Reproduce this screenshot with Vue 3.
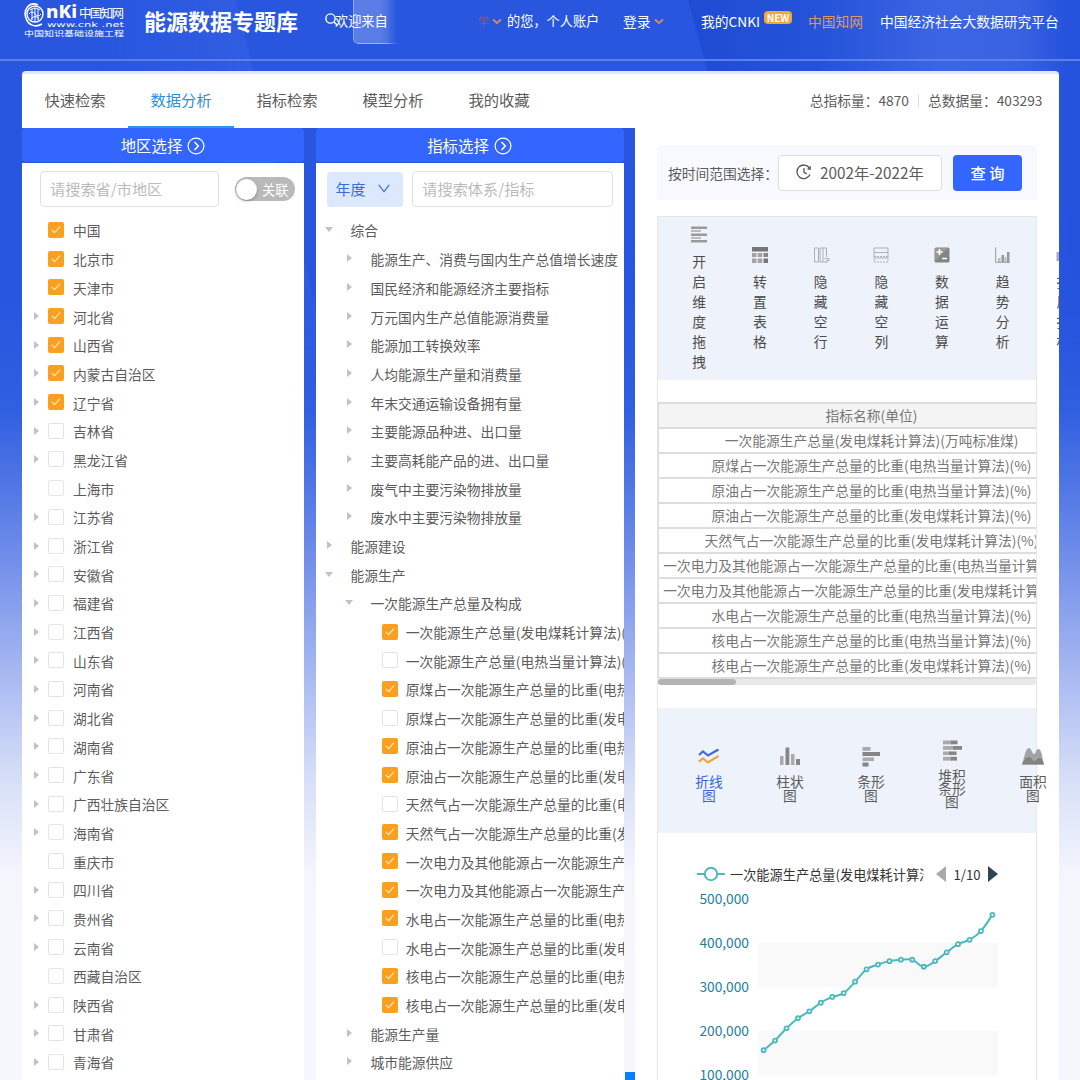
<script setup>
import { computed, ref } from 'vue'

// 顶部标签页
const tabs = ['快速检索', '数据分析', '指标检索', '模型分析', '我的收藏']
const activeTab = ref('数据分析')

// 地区列表
const noChildren = ['中国', '北京市', '天津市', '上海市', '重庆市', '西藏自治区']
const checkedRegions = ['中国', '北京市', '天津市', '河北省', '山西省', '内蒙古自治区', '辽宁省']
const regions = [
  '中国', '北京市', '天津市', '河北省', '山西省', '内蒙古自治区', '辽宁省', '吉林省',
  '黑龙江省', '上海市', '江苏省', '浙江省', '安徽省', '福建省', '江西省', '山东省',
  '河南省', '湖北省', '湖南省', '广东省', '广西壮族自治区', '海南省', '重庆市', '四川省',
  '贵州省', '云南省', '西藏自治区', '陕西省', '甘肃省', '青海省'
].map((name) => ({
  name,
  checked: checkedRegions.includes(name),
  expandable: !noChildren.includes(name)
}))

// 指标树，level 2 为可勾选的叶子节点
const indicators = [
  { level: 0, open: true, name: '综合' },
  { level: 1, name: '能源生产、消费与国内生产总值增长速度' },
  { level: 1, name: '国民经济和能源经济主要指标' },
  { level: 1, name: '万元国内生产总值能源消费量' },
  { level: 1, name: '能源加工转换效率' },
  { level: 1, name: '人均能源生产量和消费量' },
  { level: 1, name: '年末交通运输设备拥有量' },
  { level: 1, name: '主要能源品种进、出口量' },
  { level: 1, name: '主要高耗能产品的进、出口量' },
  { level: 1, name: '废气中主要污染物排放量' },
  { level: 1, name: '废水中主要污染物排放量' },
  { level: 0, name: '能源建设' },
  { level: 0, open: true, name: '能源生产' },
  { level: 1, open: true, name: '一次能源生产总量及构成' },
  { level: 2, checked: true, name: '一次能源生产总量(发电煤耗计算法)(万吨标准煤)' },
  { level: 2, checked: false, name: '一次能源生产总量(电热当量计算法)(万吨标准煤)' },
  { level: 2, checked: true, name: '原煤占一次能源生产总量的比重(电热当量计算法)(%)' },
  { level: 2, checked: false, name: '原煤占一次能源生产总量的比重(发电煤耗计算法)(%)' },
  { level: 2, checked: true, name: '原油占一次能源生产总量的比重(电热当量计算法)(%)' },
  { level: 2, checked: true, name: '原油占一次能源生产总量的比重(发电煤耗计算法)(%)' },
  { level: 2, checked: false, name: '天然气占一次能源生产总量的比重(电热当量计算法)(%)' },
  { level: 2, checked: true, name: '天然气占一次能源生产总量的比重(发电煤耗计算法)(%)' },
  { level: 2, checked: true, name: '一次电力及其他能源占一次能源生产总量的比重(电热当量计算法)(%)' },
  { level: 2, checked: true, name: '一次电力及其他能源占一次能源生产总量的比重(发电煤耗计算法)(%)' },
  { level: 2, checked: true, name: '水电占一次能源生产总量的比重(电热当量计算法)(%)' },
  { level: 2, checked: false, name: '水电占一次能源生产总量的比重(发电煤耗计算法)(%)' },
  { level: 2, checked: true, name: '核电占一次能源生产总量的比重(电热当量计算法)(%)' },
  { level: 2, checked: true, name: '核电占一次能源生产总量的比重(发电煤耗计算法)(%)' },
  { level: 1, name: '能源生产量' },
  { level: 1, name: '城市能源供应' }
]

const tools = [
  { icon: 'drag', name: '开启维度拖拽' },
  { icon: 'table', name: '转置表格' },
  { icon: 'rows', name: '隐藏空行' },
  { icon: 'cols', name: '隐藏空列' },
  { icon: 'calc', name: '数据运算' },
  { icon: 'trend', name: '趋势分析' },
  { icon: 'sort', name: '指属指标' }
]

const tableRows = [
  '一次能源生产总量(发电煤耗计算法)(万吨标准煤)',
  '原煤占一次能源生产总量的比重(电热当量计算法)(%)',
  '原油占一次能源生产总量的比重(电热当量计算法)(%)',
  '原油占一次能源生产总量的比重(发电煤耗计算法)(%)',
  '天然气占一次能源生产总量的比重(发电煤耗计算法)(%)',
  '一次电力及其他能源占一次能源生产总量的比重(电热当量计算法)(%)',
  '一次电力及其他能源占一次能源生产总量的比重(发电煤耗计算法)(%)',
  '水电占一次能源生产总量的比重(电热当量计算法)(%)',
  '核电占一次能源生产总量的比重(电热当量计算法)(%)',
  '核电占一次能源生产总量的比重(发电煤耗计算法)(%)'
]

const chartTypes = [
  { icon: 'line', lines: ['折线', '图'] },
  { icon: 'bar', lines: ['柱状', '图'] },
  { icon: 'hbar', lines: ['条形', '图'] },
  { icon: 'stack', lines: ['堆积', '条形', '图'] },
  { icon: 'area', lines: ['面积', '图'] }
]
const activeChart = ref('line')

// 折线图数据（万吨标准煤）
const series = [
  156300, 178300, 206100, 229000, 244800, 264200, 277400, 286000, 312100, 340200, 351000,
  358800, 362200, 361900, 346000, 358900, 378900, 397300, 407300, 427100, 464000
]
const yTicks = [500000, 400000, 300000, 200000, 100000]
const yOf = (value) => 15 + (500000 - value) * 0.00044

const points = computed(() => series.map((value, i) => ({ x: 105.6 + i * 11.44, y: yOf(value) })))

// 平滑曲线
const linePath = computed(() => {
  const p = points.value
  let d = `M${p[0].x} ${p[0].y}`
  for (let i = 0; i < p.length - 1; i++) {
    const prev = p[i - 1] || p[i]
    const next = p[i + 2] || p[i + 1]
    const c1 = { x: p[i].x + (p[i + 1].x - prev.x) / 6, y: p[i].y + (p[i + 1].y - prev.y) / 6 }
    const c2 = { x: p[i + 1].x - (next.x - p[i].x) / 6, y: p[i + 1].y - (next.y - p[i].y) / 6 }
    d += ` C${c1.x} ${c1.y} ${c2.x} ${c2.y} ${p[i + 1].x} ${p[i + 1].y}`
  }
  return d
})
</script>

<template>
  <div class="page">
    <div class="shade shade-left"></div>
    <div class="shade shade-right"></div>

    <header class="header">
      <svg class="logo" width="102" height="38" viewBox="0 0 102 38">
        <circle cx="11" cy="12" r="8" fill="none" stroke="#fff" stroke-width="1.4" />
        <path d="M14 3 C5 -1 -1 8 2 16 C4 23 11 26 18 22" fill="none" stroke="#fff" stroke-width="1.6" />
        <path d="M6 8 Q11 4 16 8 M5 12 Q8 8 11 12 T17 12 M7 17 Q11 12 15 17 M8 7 V18 M11 6 V19 M14 7 V18" fill="none" stroke="#fff" stroke-width="1" />
        <g fill="#fff">
          <text x="22" y="15.500" font-size="17.500" class="logo-latin" textLength="31" lengthAdjust="spacingAndGlyphs">nKi</text>
          <text x="55" y="15.500" font-size="12.500" class="logo-script" textLength="45" lengthAdjust="spacing">中国知网</text>
          <text x="23" y="24.500" font-size="7" class="logo-url" textLength="77" lengthAdjust="spacingAndGlyphs">www.cnk .net</text>
          <text x="0" y="34" font-size="7" textLength="100" lengthAdjust="spacingAndGlyphs">中国知识基础设施工程</text>
        </g>
      </svg>
      <h1 class="title">能源数据专题库</h1>
      <div class="welcome">
        <svg width="14" height="14" viewBox="0 0 14 14" fill="none" stroke="#fff" stroke-width="1.400">
          <circle cx="5.500" cy="5.500" r="4.600" />
          <path d="M9 9 L12.500 12.500" />
        </svg>
        <span>欢迎来自</span>
        <i class="glass"></i>
      </div>
      <div class="school">
        <span>学</span>
        <svg width="10" height="7" viewBox="0 0 10 7"><path d="M1 1.500 L5 5 L9 1.500" fill="none" stroke="#d98a5c" stroke-width="1.800" /></svg>
      </div>
      <span class="account">的您，个人账户</span>
      <div class="login">
        <span>登录</span>
        <svg width="10" height="7" viewBox="0 0 10 7"><path d="M1 1.500 L5 5 L9 1.500" fill="none" stroke="#d98a5c" stroke-width="1.800" /></svg>
      </div>
      <div class="my">
        <span>我的CNKI</span>
        <b class="badge">NEW</b>
      </div>
      <span class="orange">中国知网</span>
      <span class="platform">中国经济社会大数据研究平台</span>
    </header>

    <main class="main">
      <nav class="tabs">
        <span v-for="tab in tabs" :key="tab" class="tab" :class="{ active: tab === activeTab }">{{ tab }}</span>
        <div class="totals">
          <span>总指标量：4870</span>
          <i></i>
          <span>总数据量：403293</span>
        </div>
      </nav>

      <div class="columns">
        <!-- 地区 -->
        <section class="panel region">
          <div class="panel-head">
            地区选择
            <svg width="18" height="18" viewBox="0 0 18 18" fill="none" stroke="#fff" stroke-width="1.200">
              <circle cx="9" cy="9" r="7.900" />
              <path d="M7.500 5 L11.300 9 L7.500 13" stroke-width="1.500" />
            </svg>
          </div>
          <div class="panel-body">
            <div class="search-row">
              <div class="input">请搜索省/市地区</div>
              <div class="switch"><i></i>关联</div>
            </div>
            <ul class="tree">
              <li v-for="item in regions" :key="item.name">
                <span class="arrow" :class="{ hidden: !item.expandable }"></span>
                <span class="check" :class="{ on: item.checked }">
                  <svg v-if="item.checked" width="16" height="16" viewBox="0 0 16 16"><path d="M3.800 7.800 L6.600 10.600 L12 4.600" /></svg>
                </span>
                <span class="label">{{ item.name }}</span>
              </li>
            </ul>
          </div>
        </section>

        <!-- 指标 -->
        <section class="panel indicator">
          <div class="panel-head">
            指标选择
            <svg width="18" height="18" viewBox="0 0 18 18" fill="none" stroke="#fff" stroke-width="1.200">
              <circle cx="9" cy="9" r="7.900" />
              <path d="M7.500 5 L11.300 9 L7.500 13" stroke-width="1.500" />
            </svg>
          </div>
          <div class="panel-body">
            <div class="search-row">
              <div class="select">
                年度
                <svg width="12" height="9" viewBox="0 0 12 9"><path d="M0.800 0.800 L6 7.500 L11.200 0.800" fill="none" stroke="#3d6bd6" stroke-width="1.200" /></svg>
              </div>
              <div class="input">请搜索体系/指标</div>
            </div>
            <ul class="tree">
              <li v-for="(item, i) in indicators" :key="i" :class="'level-' + item.level">
                <span v-if="item.level < 2" class="arrow" :class="{ open: item.open }"></span>
                <span v-else class="check" :class="{ on: item.checked }">
                  <svg v-if="item.checked" width="16" height="16" viewBox="0 0 16 16"><path d="M3.800 7.800 L6.600 10.600 L12 4.600" /></svg>
                </span>
                <span class="label">{{ item.name }}</span>
              </li>
            </ul>
          </div>
        </section>

        <!-- 结果 -->
        <section class="result">
          <div class="query">
            <span class="query-label">按时间范围选择：</span>
            <div class="date">
              <svg width="16" height="16" viewBox="0 0 16 16" fill="none" stroke="#555" stroke-width="1.300">
                <path d="M14 10.600 A6.800 6.800 0 1 1 13.600 4.300" />
                <path d="M14.200 2.200 V5 H11.600 M8 4 V8.400 L10.800 9.800" />
              </svg>
              2002年-2022年
            </div>
            <div class="button">查 询</div>
          </div>

          <div class="sheet">
            <div class="tools">
              <div v-for="tool in tools" :key="tool.icon" class="tool">
                <svg width="18" height="18" viewBox="0 0 18 18">
                  <g v-if="tool.icon === 'drag'" fill="#999">
                    <rect x="1" y="0.500" width="16" height="2.500" />
                    <rect x="1" y="4" width="10" height="2" fill="#bbb" />
                    <rect x="1" y="7.500" width="16" height="2.500" />
                    <rect x="1" y="11" width="10" height="2" fill="#bbb" />
                    <rect x="1" y="14" width="16" height="2.500" />
                  </g>
                  <g v-else-if="tool.icon === 'table'" fill="#a3a3a3">
                    <rect x="1" y="1" width="16" height="4.500" fill="#777" />
                    <rect x="1" y="7" width="4.500" height="4" /><rect x="6.700" y="7" width="4.500" height="4" /><rect x="12.500" y="7" width="4.500" height="4" fill="#888" />
                    <rect x="1" y="12.500" width="4.500" height="4.500" /><rect x="6.700" y="12.500" width="4.500" height="4.500" /><rect x="12.500" y="12.500" width="4.500" height="4.500" fill="#777" />
                  </g>
                  <g v-else-if="tool.icon === 'rows'" fill="none" stroke="#b0b0b0">
                    <path d="M2.500 2 H6.500 V16 H2.500 Z M8 2 H11 V16 H8 Z M14.500 2 V11 M11 2 H14.500 M11 16 H16" />
                    <path d="M12.500 12.500 H17 V14.500 H14" />
                  </g>
                  <g v-else-if="tool.icon === 'cols'" fill="none" stroke="#b0b0b0">
                    <path d="M2 2 H16 V6.500 H2 Z M2 6.500 V12 H16 V6.500" />
                    <path d="M2 10.500 H16 M2 13 V16 H16 V13" stroke-dasharray="2 1" />
                  </g>
                  <g v-else-if="tool.icon === 'calc'">
                    <rect x="1.500" y="1.500" width="15" height="15" rx="1.500" fill="#848484" />
                    <path d="M2 15 L15 2 H3 Q2 2 2 3 Z" fill="#999" />
                    <path d="M3.500 6 H9.500 M6.500 3 V9 M9 12.500 H14" stroke="#fff" stroke-width="1.600" />
                  </g>
                  <g v-else-if="tool.icon === 'trend'" fill="#999">
                    <path d="M1.700 1.500 V16.300 H16" fill="none" stroke="#999" />
                    <rect x="4" y="12" width="2.500" height="4" fill="#bbb" /><rect x="7.500" y="9" width="2.500" height="7" />
                    <rect x="10.500" y="11" width="2" height="5" fill="#bbb" /><rect x="13" y="6" width="2.500" height="10" />
                  </g>
                  <rect v-else x="2.500" y="6" width="13" height="9" fill="#a5abb8" />
                </svg>
                <span>{{ tool.name }}</span>
              </div>
            </div>

            <div class="table-wrap">
              <table>
                <thead>
                  <tr><th>指标名称(单位)</th></tr>
                </thead>
                <tbody>
                  <tr v-for="row in tableRows" :key="row"><td>{{ row }}</td></tr>
                </tbody>
              </table>
              <div class="scrollbar"><i></i></div>
            </div>

            <div class="chart-types">
              <div v-for="type in chartTypes" :key="type.icon" class="chart-type" :class="{ active: type.icon === activeChart }">
                <svg width="24" height="22" viewBox="0 0 24 22">
                  <g v-if="type.icon === 'line'" fill="none" stroke-width="2.200">
                    <path d="M2 9 L6 5.500 L11 9.500 L21.500 3.500" stroke="#4468d6" />
                    <path d="M2 15.500 L6 12.500 L11 16.500 L21.500 10" stroke="#f0a344" />
                  </g>
                  <g v-else-if="type.icon === 'bar'" fill="#868686">
                    <rect x="2" y="10" width="3.500" height="9" fill="#aaa" /><rect x="7.500" y="1.500" width="3.800" height="17.500" />
                    <rect x="13" y="8" width="3.500" height="11" fill="#aaa" /><rect x="18" y="13" width="4" height="6" />
                  </g>
                  <g v-else-if="type.icon === 'hbar'" fill="#868686">
                    <rect x="3.500" y="1" width="8" height="3.800" fill="#aaa" /><rect x="3.500" y="6" width="17.500" height="4" />
                    <rect x="3.500" y="11.500" width="11.500" height="3.500" fill="#aaa" /><rect x="3.500" y="16.500" width="6" height="4" />
                  </g>
                  <g v-else-if="type.icon === 'stack'" fill="#868686">
                    <rect x="3" y="0.500" width="9" height="3.800" fill="#aaa" /><rect x="11" y="0.500" width="6.500" height="3.800" />
                    <rect x="3" y="6" width="11" height="3.800" fill="#aaa" /><rect x="13" y="6" width="9" height="3.800" />
                    <rect x="3" y="11.500" width="8" height="3.500" fill="#aaa" /><rect x="9" y="11.500" width="7.500" height="3.500" />
                    <rect x="3" y="16.800" width="9" height="3.800" fill="#aaa" /><rect x="11" y="16.800" width="6" height="3.800" />
                  </g>
                  <g v-else>
                    <path d="M1 18.500 C3 14 4 2 8 2 C10.500 2 11 8 13 8 C15 8 15 3 17.500 3 C21 3 21.500 14 23 18.500 Z" fill="#a3a3a3" />
                    <path d="M1 18.500 C3 14 5 11 8 11 C11 11 11 15 13 15 C15.500 15 16 12 18.500 12 C21 12 22 15 23 18.500 Z" fill="#828282" />
                  </g>
                </svg>
                <span v-for="line in type.lines" :key="line" class="type-line">{{ line }}</span>
              </div>
            </div>

            <div class="legend">
              <svg width="28" height="16" viewBox="0 0 28 16" stroke="#4bb9bf" stroke-width="2">
                <path d="M0 8 H28" />
                <circle cx="14" cy="8" r="6.200" fill="#fff" />
              </svg>
              <span class="legend-name">一次能源生产总量(发电煤耗计算法)</span>
              <svg width="10" height="16" viewBox="0 0 10 16"><path d="M10 0 V16 L0 8 Z" fill="#aaa" /></svg>
              <span class="legend-page">1/10</span>
              <svg width="10" height="16" viewBox="0 0 10 16"><path d="M0 0 V16 L10 8 Z" fill="#2f4554" /></svg>
            </div>
            <svg class="chart" width="378" height="196" viewBox="0 0 378 196">
              <rect x="100" y="59" width="240" height="44" fill="#f9f9f9" />
              <rect x="100" y="147" width="240" height="44" fill="#f9f9f9" />
              <text v-for="tick in yTicks" :key="tick" x="91" :y="yOf(tick) + 5" text-anchor="end">{{ tick.toLocaleString('en-US') }}</text>
              <path :d="linePath" fill="none" stroke="#4bb9bf" stroke-width="2" />
              <circle v-for="(point, i) in points" :key="i" :cx="point.x" :cy="point.y" r="2" fill="#fff" stroke="#4bb9bf" stroke-width="1.800" />
            </svg>
          </div>
        </section>
      </div>
    </main>
    <div class="float-block"></div>
  </div>
</template>

<style>
body {
  margin: 0;
  overflow: hidden;
}
</style>

<style scoped>
.page {
  position: relative;
  width: 1080px;
  height: 1080px;
  overflow: hidden;
  box-sizing: border-box;
  font-family: "Noto Sans CJK SC", "Noto Sans", sans-serif;
  font-size: 13.75px;
  color: #5c5c5c;
  background: linear-gradient(180deg, #2856df 0, #2856df 300px, #305fe0 410px, #6686e8 535px, #b4c2f3 700px, #d9e1f8 785px, #f3f5fc 870px, #f5f7fc 920px);
}
.page i {
  font-style: normal;
}
.shade {
  position: absolute;
  top: 0;
  height: 400px;
  mask-image: linear-gradient(180deg, #000 50%, transparent);
}
.shade-left {
  left: 90px;
  width: 250px;
  background: linear-gradient(90deg, rgba(70, 110, 235, 0), rgba(80, 118, 236, 0.35));
  clip-path: polygon(0 0, 58% 0, 100% 100%, 0 100%);
}
.shade-right {
  left: 680px;
  width: 400px;
  background: linear-gradient(90deg, #1f4bd2 0, #2453da 35%, #3c65e3 65%, #3962e2 85%, #2452dc 97%);
  clip-path: polygon(2% 0, 100% 0, 100% 100%, 30% 100%);
}
.header {
  position: relative;
  height: 59px;
  padding-left: 24px;
  border-bottom: 2px solid #5c80ea;
  display: grid;
  grid-template-columns: 120px 181px 153px 29px 116px 78px 107px 72px 1fr;
  align-items: start;
  color: #fff;
  line-height: 20px;
  white-space: nowrap;
}
.header > * {
  margin-top: 11px;
}
.header .logo {
  margin-top: 2px;
}
.logo-latin {
  font-family: "Noto Sans", sans-serif;
  font-weight: 800;
}
.logo-script {
  font-family: "Liberation Serif", "Noto Sans CJK SC", serif;
}
.logo-url {
  font-family: "DejaVu Sans", sans-serif;
}
.header .title {
  margin: 5px 0 0;
  font-size: 22px;
  line-height: 30px;
  font-weight: 700;
}
.welcome {
  display: flex;
  font-size: 13.2px;
}
.welcome svg {
  margin: 2px -4px 0 0;
  flex: none;
}
.glass {
  position: absolute;
  left: 353px;
  top: -4px;
  width: 44px;
  height: 46px;
  border: 1px solid rgba(255, 255, 255, 0.4);
  border-right: 0;
  border-radius: 5px 0 0 5px;
  background: linear-gradient(90deg, rgba(255, 255, 255, 0.24) 55%, rgba(255, 255, 255, 0.1));
  mask-image: linear-gradient(90deg, #000 75%, transparent);
}
.school,
.login {
  display: flex;
  align-items: center;
  gap: 3px;
}
.school span {
  width: 11px;
  font-size: 11px;
  color: #775d9f;
}
.account {
  font-size: 13.2px;
}
.my {
  display: flex;
  gap: 4px;
}
.badge {
  width: 28px;
  height: 13px;
  line-height: 13px;
  border-radius: 4px;
  background: #f4a63a;
  font-size: 10px;
  text-align: center;
}
.orange {
  color: #d99a6c;
}
.main {
  position: relative;
  margin: 10px 21px 0 22px;
}
.tabs {
  height: 57px;
  display: flex;
  background: #fff;
  border-top: 3px solid #e0e9fd;
  border-radius: 4px 4px 0 0;
  box-sizing: border-box;
}
.tab {
  width: 106px;
  height: 54px;
  box-sizing: border-box;
  text-align: center;
  font-size: 15.3px;
  line-height: 51px;
}
.tab.active {
  color: #2a90dc;
  border-bottom: 2px solid #2a96ee;
}
.totals {
  display: flex;
  align-items: center;
  gap: 9px;
  margin-left: auto;
  padding: 0 16.5px 2px 0;
}
.totals i {
  width: 1px;
  height: 13px;
  background: #ddd;
}
.columns {
  display: grid;
  grid-template-columns: 282px 308px 1fr;
  column-gap: 11.5px;
  height: 960px;
}
.panel {
  min-width: 0;
  display: flex;
  flex-direction: column;
}
.panel-head {
  height: 34px;
  display: flex;
  align-items: center;
  justify-content: center;
  gap: 5px;
  padding-bottom: 1px;
  box-sizing: border-box;
  border-radius: 4px;
  background: #3366ff;
  color: #fff;
  font-size: 15.4px;
}
.panel-head svg {
  margin-top: 3px;
}
.panel-body {
  flex: 1;
  margin-top: 1px;
  background: #fff;
  overflow: hidden;
}
.search-row {
  display: flex;
  align-items: center;
  padding: 8px 9px 0 18px;
  height: 36px;
}
.indicator .search-row {
  padding: 8px 11px 0 11px;
}
.input {
  width: 179px;
  height: 36px;
  box-sizing: border-box;
  padding-left: 9px;
  border: 1px solid #e2dfe0;
  border-radius: 4px;
  font-size: 15.2px;
  line-height: 33px;
  color: #bbb;
}
.indicator .input {
  width: 201px;
}
.switch {
  width: 60px;
  height: 24px;
  margin-left: auto;
  display: flex;
  align-items: center;
  box-sizing: border-box;
  border-radius: 12px;
  background: #b9b9b9;
  color: #fff;
  font-size: 13.2px;
}
.switch i {
  width: 21px;
  height: 21px;
  margin: 0 5px 0 1px;
  border-radius: 50%;
  background: #fff;
  box-shadow: 0 1px 3px rgba(0, 0, 0, 0.3);
}
.select {
  width: 77px;
  height: 35px;
  margin-right: 9px;
  padding: 0 13px 2px 9px;
  box-sizing: border-box;
  display: flex;
  align-items: center;
  justify-content: space-between;
  border-radius: 4px;
  background: #dbe8fd;
  color: #3d6bd6;
  font-size: 15px;
}
.tree {
  list-style: none;
  margin: 0;
  padding: 8.6px 0 0 11.5px;
}
.indicator .tree {
  padding-left: 9px;
}
.tree li {
  height: 28.69px;
  display: flex;
  align-items: center;
  white-space: nowrap;
}
.arrow {
  flex: none;
  width: 14.5px;
  display: flex;
}
.arrow::before {
  content: "";
  border: 4px solid transparent;
  border-left: 5px solid #bfc2c8;
  border-right: 0;
}
.arrow.open::before {
  border: 4px solid transparent;
  border-top: 5px solid #bfc2c8;
  border-bottom: 0;
}
.arrow.hidden {
  visibility: hidden;
}
.indicator .arrow {
  width: 26px;
}
.indicator .arrow:not(.open) {
  padding-left: 2px;
  padding-bottom: 1px;
  width: 24px;
}
.level-1 {
  padding-left: 20px;
}
.level-2 {
  padding-left: 57px;
}
.check {
  flex: none;
  width: 16px;
  height: 16px;
  box-sizing: border-box;
  border: 1px solid #e2e4e6;
  border-radius: 2px;
  background: #fff;
}
.check.on {
  border: 0;
  background: #faa01e;
}
.check svg {
  display: block;
}
.check path {
  fill: none;
  stroke: #fde9c4;
  stroke-width: 1.2;
}
.label {
  padding-top: 1px;
}
.check + .label {
  padding-left: 9px;
}
.indicator .check + .label {
  padding-left: 8.3px;
}
.result {
  min-width: 0;
  overflow: hidden;
  background: #fff;
  padding: 17px 22px 0 22px;
}
.query {
  height: 55px;
  display: flex;
  align-items: center;
  background: #f7f9ff;
  padding-left: 11px;
  box-sizing: border-box;
  border-radius: 4px;
  white-space: nowrap;
}
.query-label {
  width: 110px;
}
.date {
  width: 164px;
  height: 36px;
  box-sizing: border-box;
  padding: 0 0 1px 17px;
  display: flex;
  align-items: center;
  gap: 8px;
  background: #fff;
  border: 1px solid #dedede;
  border-radius: 4px;
  font-size: 15.3px;
}
.button {
  width: 69px;
  height: 36px;
  margin-left: 11px;
  border-radius: 4px;
  background: #3366ff;
  color: #fff;
  font-size: 15.3px;
  font-weight: 500;
  line-height: 34px;
  text-align: center;
}
.sheet {
  margin-top: 16px;
  height: 880px;
  box-sizing: border-box;
  border: 1px solid #e6e6e6;
}
.tools {
  height: 163px;
  display: flex;
  align-items: center;
  padding: 0 0 1px 11px;
  box-sizing: border-box;
  background: #edf2fb;
}
.tool {
  flex: none;
  width: 60.7px;
  display: flex;
  flex-direction: column;
  align-items: center;
  gap: 7px;
  color: #4c4c4c;
}
.tool span {
  width: 14px;
  line-height: 20px;
}
.table-wrap {
  margin-top: 22px;
  height: 284px;
  overflow: hidden;
}
table {
  width: 428px;
  border-collapse: collapse;
  table-layout: fixed;
  color: #777;
}
th,
td {
  height: 23px;
  padding: 0;
  border: 2px solid #ddd;
  border-left-width: 1px;
  font-weight: 400;
  line-height: 23px;
  text-align: center;
  white-space: nowrap;
}
th {
  background: #f4f4f4;
}
.scrollbar {
  height: 6px;
  border-radius: 3px;
  background: #e8e8e8;
}
.scrollbar i {
  display: block;
  width: 78px;
  height: 6px;
  border-radius: 3px;
  background: #b4b4b4;
}
.chart-types {
  height: 125px;
  margin-top: 22px;
  padding: 7px 0 0 10.5px;
  box-sizing: border-box;
  display: flex;
  align-items: center;
  background: #edf2fb;
}
.chart-type {
  flex: none;
  width: 81px;
  display: flex;
  flex-direction: column;
  align-items: center;
}
.chart-type svg {
  margin-bottom: 7px;
}
.type-line {
  line-height: 13.2px;
}
.chart-type.active {
  color: #3c66dc;
}
.legend {
  display: flex;
  align-items: center;
  height: 20px;
  padding: 31px 0 0 39px;
  color: #333;
  font-size: 13.2px;
}
.legend-name {
  width: 194px;
  margin: 0 12px 0 5px;
  overflow: hidden;
  white-space: nowrap;
}
.legend-page {
  width: 42px;
  text-align: center;
}
.chart {
  display: block;
}
.chart text {
  font-size: 13.75px;
  fill: #23809f;
}
.float-block {
  position: absolute;
  left: 625px;
  top: 1072px;
  width: 10px;
  height: 8px;
  background: #0a7cff;
}
</style>
